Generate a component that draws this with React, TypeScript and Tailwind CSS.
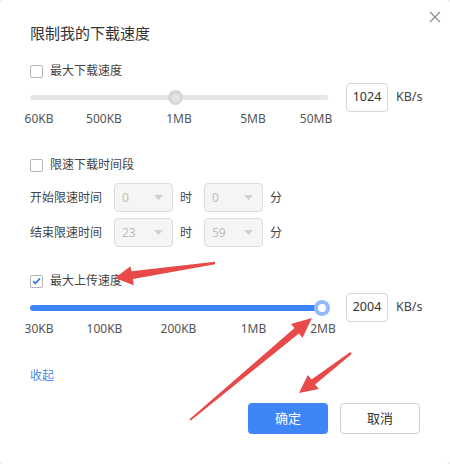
import React from 'react'

const font = { fontFamily: '"Noto Sans", "Noto Sans CJK SC", sans-serif' }

const Checkbox = ({ checked, label }: { checked?: boolean; label: string }) => (
  <div className="flex items-center h-[18px]">
    <span className="w-[13px] h-[13px] rounded-[2px] border border-[#b5b5b5] bg-white flex items-center justify-center">
      {checked && (
        <svg width="9" height="8" viewBox="0 0 9 8">
          <path d="M1 4.2 L3.4 6.4 L8 1.4" fill="none" stroke="#3b82f6" strokeWidth="1.8" />
        </svg>
      )}
    </span>
    <span className="ml-[7px] text-[12px] text-[#444]">{label}</span>
  </div>
)

const Select = ({ value }: { value: string }) => (
  <div className="w-[59px] h-[29px] rounded-[4px] border border-[#dcdcdc] bg-[#f5f5f5] flex items-center justify-between pl-[7px] pr-[9px]">
    <span className="text-[12px] text-[#bdbdbd]">{value}</span>
    <svg width="9" height="5" viewBox="0 0 9 5">
      <path d="M0 0 L9 0 L4.5 5 Z" fill="#d0d0d0" />
    </svg>
  </div>
)

const SpeedInput = ({ value }: { value: string }) => (
  <div className="flex items-center ml-[18px]">
    <div className="w-[42px] h-[29px] rounded-[4px] border border-[#d6d6d6] flex items-center justify-center text-[12.5px] text-[#333]">
      {value}
    </div>
    <span className="ml-[8px] text-[12.5px] text-[#444]">KB/s</span>
  </div>
)

const Labels = ({ items }: { items: [string, number][] }) => (
  <div className="flex ml-[-16px] h-[16px] items-center text-[12px] text-[#555]">
    {items.map(([t, w]) => (
      <span key={t} className="text-center" style={{ width: w }}>
        {t}
      </span>
    ))}
  </div>
)

const TimeRow = ({ label, h, m }: { label: string; h: string; m: string }) => (
  <div className="flex items-center">
    <span className="w-[84px] text-[12px] text-[#444]">{label}</span>
    <Select value={h} />
    <span className="ml-[7px] w-[24px] text-[12px] text-[#444]">时</span>
    <Select value={m} />
    <span className="ml-[7px] text-[12px] text-[#444]">分</span>
  </div>
)

export default function App() {
  return (
    <div className="w-[450px] h-[464px] bg-[#ececec]" style={font}>
      <div className="relative w-full h-full bg-white rounded-[4px] pl-[30px] flex flex-col">
        <button className="absolute top-[11px] right-[9px] w-[12px] h-[12px]">
          <svg width="12" height="12" viewBox="0 0 12 12">
            <path d="M1 1 L11 11 M11 1 L1 11" stroke="#888" strokeWidth="1.1" />
          </svg>
        </button>

        <div className="mt-[24px] text-[15px] leading-[18px] text-[#333]">限制我的下载速度</div>

        <div className="mt-[20px]">
          <Checkbox label="最大下载速度" />
        </div>

        <div className="mt-[3px] flex items-center h-[29px]">
          <div className="relative w-[298px] h-[5px] bg-[#e6e6e6] rounded-full">
            <span className="absolute left-[138px] top-[-5px] w-[15px] h-[15px] rounded-full bg-[#d6d6d6] flex items-center justify-center">
              <span className="w-[8px] h-[8px] rounded-full bg-[#e4e4e4]" />
            </span>
          </div>
          <SpeedInput value="1024" />
        </div>

        <div className="mt-[-1px]">
          <Labels items={[['60KB', 50], ['500KB', 80], ['1MB', 70], ['5MB', 78], ['50MB', 48]]} />
        </div>

        <div className="mt-[29px]">
          <Checkbox label="限速下载时间段" />
        </div>

        <div className="mt-[9px] flex flex-col gap-[6px]">
          <TimeRow label="开始限速时间" h="0" m="0" />
          <TimeRow label="结束限速时间" h="23" m="59" />
        </div>

        <div className="mt-[25px]">
          <Checkbox checked label="最大上传速度" />
        </div>

        <div className="mt-[3px] flex items-center h-[29px]">
          <div className="relative w-[298px] h-[6px]">
            <div className="w-[292px] h-[6px] bg-[#3d84f6] rounded-l-full" />
            <span className="absolute left-[284px] top-[-5px] w-[16px] h-[16px] rounded-full border-[4px] border-[#93bbfb] bg-white" />
          </div>
          <SpeedInput value="2004" />
        </div>

        <div className="mt-[-1px]">
          <Labels items={[['30KB', 50], ['100KB', 81], ['200KB', 67], ['1MB', 83], ['2MB', 56]]} />
        </div>

        <div className="mt-[32px] text-[12px] leading-[14px] text-[#4a88f0]">收起</div>

        <div className="mt-[20px] flex pl-[218px] gap-[12px]">
          <button className="w-[80px] h-[31px] rounded-[4px] bg-[#3e86f8] text-white text-[13px]">确定</button>
          <button className="w-[80px] h-[31px] rounded-[4px] border border-[#cfcfcf] bg-white text-[#333] text-[13px]">取消</button>
        </div>

        <svg className="absolute inset-0 pointer-events-none" width="450" height="464" viewBox="0 0 450 464">
          <g fill="#e84a4a">
            <polygon points="215.1,264.2 214.9,261.8 131.5,271.2 130.5,266.2 115,278 133.8,285.2 133,279" />
            <polygon points="190.8,420.6 189.2,419.4 294.5,328.1 290.9,323.9 312,318 302.5,337.7 298.9,333.5" />
            <polygon points="351.7,354 350.3,352 311.5,379.6 307.8,374.9 299,393 318.8,389.1 315.1,384.4" />
          </g>
        </svg>
      </div>
    </div>
  )
}
